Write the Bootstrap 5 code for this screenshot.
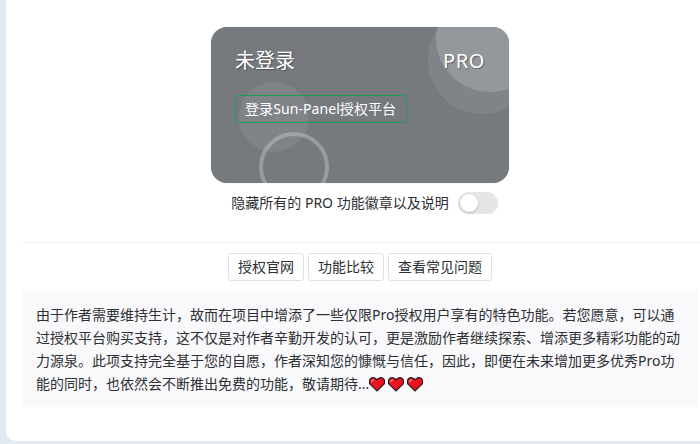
<!DOCTYPE html>
<html lang="zh-CN">
<head>
    <meta charset="UTF-8">
    <meta name="viewport" content="width=device-width, initial-scale=1.0">
    <title>Sun-Panel PRO</title>
    <link rel="stylesheet" href="https://cdn.jsdelivr.net/npm/bootstrap@5.3.0/dist/css/bootstrap.min.css">
    <style>
        html, body {
            height: 100%;
        }
        body {
            background-color: #e3e9f2;
            font-family: "Noto Sans", "Noto Sans CJK SC", sans-serif;
            font-size: 14px;
            color: #2c2f33;
            overflow: hidden;
        }
        .pro-page {
            height: 441px;
            margin-left: 6px;
            padding: 27px 2px 0 16px;
            background-color: #fff;
            border-radius: 0 0 0 10px;
        }
        .vip-card {
            position: relative;
            overflow: hidden;
            width: 298px;
            height: 156px;
            padding: 20px 24px;
            border-radius: 16px;
            color: #fff;
            background-color: #767a7f;
            box-shadow: 0 0 1px rgba(0, 0, 0, .25);
        }
        .vip-head {
            position: relative;
            font-size: 20px;
            line-height: 28px;
            text-shadow: 1px 1px 1px rgba(0, 0, 0, .35);
        }
        .vip-pro {
            letter-spacing: .6px;
        }
        .vip-login {
            position: relative;
            display: block;
            width: 172px;
            height: 28px;
            margin-top: 20px;
            padding: 0 9px;
            font-size: 14px;
            line-height: 26px;
            letter-spacing: .08px;
            text-align: left;
            white-space: nowrap;
            color: #fff;
            border: 1px solid #18a058;
            border-radius: 3px;
        }
        .vip-login:hover {
            color: #fff;
            border-color: #18a058;
        }
        .blob {
            position: absolute;
            border-radius: 50%;
            background-color: rgba(255, 255, 255, .08);
        }
        .blob-a {
            top: -21px;
            left: 217px;
            width: 108px;
            height: 108px;
        }
        .blob-b {
            top: -43px;
            left: 225px;
            width: 108px;
            height: 108px;
            background-color: rgba(255, 255, 255, .16);
        }
        .blob-c {
            top: 55px;
            left: 28px;
            width: 70px;
            height: 70px;
        }
        .blob-d {
            top: 105px;
            left: 48px;
            width: 70px;
            height: 70px;
            background: none;
            border: 4px solid rgba(255, 255, 255, .25);
        }
        .hide-row {
            height: 22px;
            margin-top: 9px;
            padding-left: 9px;
            gap: 9px;
            line-height: 22px;
        }
        .toggle-rail {
            position: relative;
            width: 40px;
            height: 22px;
            border-radius: 11px;
            background-color: #e6e6e6;
        }
        .toggle-knob {
            position: absolute;
            top: 2px;
            left: 2px;
            width: 18px;
            height: 18px;
            border-radius: 50%;
            background-color: #fff;
            box-shadow: 0 1px 3px rgba(0, 0, 0, .2);
        }
        .pro-line {
            margin: 28px -2px 10px 0;
            border-top: 1px solid #eeeff2;
        }
        .plain-btns {
            gap: 4px;
        }
        .plain-btn {
            height: 28px;
            padding: 0 9px;
            font-size: 14px;
            line-height: 26px;
            color: #2c2f33;
            border: 1px solid #e0e0e6;
            border-radius: 3px;
        }
        .pro-note {
            margin-top: 10px;
            padding: 12px 14px;
            line-height: 23px;
            background-color: #f9f9fb;
            border-radius: 3px;
        }
        .heart {
            width: 16px;
            height: 16px;
            margin-right: 3px;
            vertical-align: -3px;
        }
    </style>
</head>
<body>

<svg class="d-none">
    <symbol id="heartIcon" viewBox="0 0 16 16">
        <path d="M8 14.9 1.500 8.700C-.2 6.900 0 3.900 1.800 2.500 3.700 1.100 6.400 1.600 8 3.800c1.600-2.200 4.300-2.700 6.200-1.300 1.800 1.400 2 4.400.3 6.200z" fill="#e8141f" stroke="#241a1b" stroke-width="1.200"/>
        <path d="M2.800 6.300C2.600 4.900 3.700 3.700 5 3.800" fill="none" stroke="#f58a8f" stroke-width="1.200"/>
    </symbol>
</svg>

<div class="pro-page">
    <div class="d-flex justify-content-center">
        <div class="vip-card">
            <span class="blob blob-a"></span>
            <span class="blob blob-b"></span>
            <span class="blob blob-c"></span>
            <span class="blob blob-d"></span>
            <div class="vip-head d-flex justify-content-between">
                <span>未登录</span>
                <span class="vip-pro">PRO</span>
            </div>
            <button type="button" class="btn vip-login">登录Sun-Panel授权平台</button>
        </div>
    </div>

    <div class="hide-row d-flex justify-content-center">
        <span>隐藏所有的 PRO 功能徽章以及说明</span>
        <span class="toggle-rail"><span class="toggle-knob"></span></span>
    </div>

    <div class="pro-line"></div>

    <div class="plain-btns d-flex justify-content-center">
        <button type="button" class="btn plain-btn">授权官网</button>
        <button type="button" class="btn plain-btn">功能比较</button>
        <button type="button" class="btn plain-btn">查看常见问题</button>
    </div>

    <div class="pro-note">
        由于作者需要维持生计，故而在项目中增添了一些仅限Pro授权用户享有的特色功能。若您愿意，可以通过授权平台购买支持，这不仅是对作者辛勤开发的认可，更是激励作者继续探索、增添更多精彩功能的动力源泉。此项支持完全基于您的自愿，作者深知您的慷慨与信任，因此，即便在未来增加更多优秀Pro功能的同时，也依然会不断推出免费的功能，敬请期待...<svg class="heart"><use href="#heartIcon"/></svg><svg class="heart"><use href="#heartIcon"/></svg><svg class="heart"><use href="#heartIcon"/></svg>
    </div>
</div>

<script src="https://cdn.jsdelivr.net/npm/bootstrap@5.3.0/dist/js/bootstrap.bundle.min.js"></script>
</body>
</html>
